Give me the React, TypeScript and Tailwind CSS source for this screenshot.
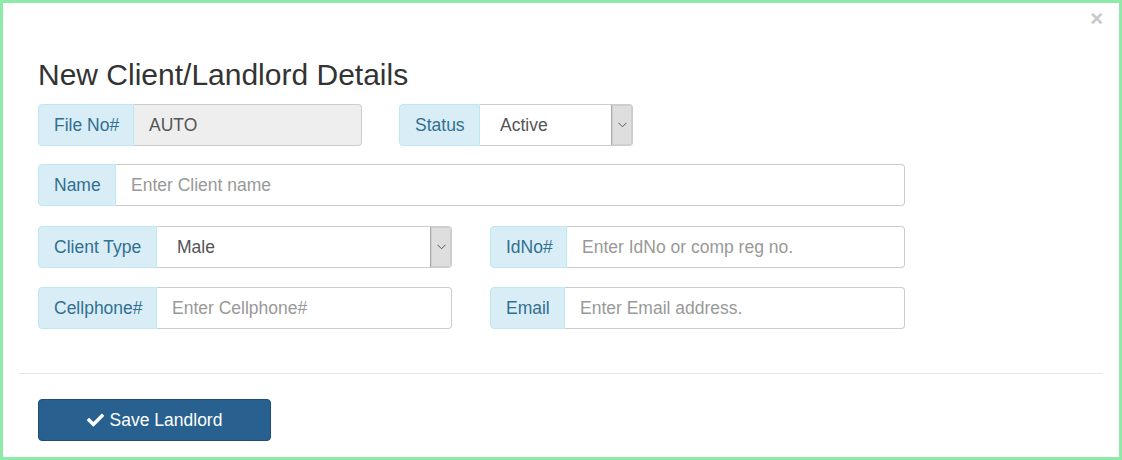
import React from 'react';

const addon =
  'flex items-center px-[15px] bg-[#d9edf7] text-[#31708f] border border-[#bce8f1] rounded-l-[4px] whitespace-nowrap';
const field =
  'flex-1 min-w-0 flex items-center px-[15px] border border-l-0 border-[#ccc] rounded-r-[4px] text-[#555]';

function Chevron() {
  return (
    <svg width="9" height="6" viewBox="0 0 9 6" fill="none">
      <path d="M0.5 0.8 L4.5 4.8 L8.5 0.8" stroke="#555" strokeWidth="1" />
    </svg>
  );
}

function SelectBox({ value }: { value: string }) {
  return (
    <div className="flex-1 min-w-0 flex border border-l-0 border-[#ccc] rounded-r-[4px] text-[#555] bg-white overflow-hidden">
      <div className="flex-1 flex items-center pl-[20px]">{value}</div>
      <div className="w-[21px] flex items-center justify-center bg-[#dedede] border-l border-[#aaa] shadow-[inset_0_0_0_1px_#cfcfcf]">
        <Chevron />
      </div>
    </div>
  );
}

function Group({
  label,
  width,
  addonWidth,
  children,
}: {
  label: string;
  width: string;
  addonWidth: string;
  children: React.ReactNode;
}) {
  return (
    <div className={`flex h-[42px] ${width}`}>
      <div className={`${addon} ${addonWidth}`}>{label}</div>
      {children}
    </div>
  );
}

export default function App() {
  return (
    <div className="w-[1122px] h-[460px] border-[3px] border-[#8eeaa9] bg-white relative font-['Liberation_Sans',Arial,sans-serif] text-[17.5px]">
      <button className="absolute top-[5px] right-[16px] text-[22px] font-bold leading-none text-[#c8c8c8]">
        ×
      </button>

      <div className="px-[35px]">
        <h2 className="mt-[55px] text-[30px] leading-[33px] text-[#333]">New Client/Landlord Details</h2>

        <div className="mt-[13px] flex gap-[37px]">
          <Group label="File No#" width="w-[324px]" addonWidth="w-[96px]">
            <div className={`${field} bg-[#eee]`}>AUTO</div>
          </Group>
          <Group label="Status" width="w-[234px]" addonWidth="w-[81px]">
            <SelectBox value="Active" />
          </Group>
        </div>

        <div className="mt-[18px] flex">
          <Group label="Name" width="w-[867px]" addonWidth="w-[78px]">
            <div className={`${field} bg-white text-[#999]`}>Enter Client name</div>
          </Group>
        </div>

        <div className="mt-[20px] flex gap-[38px]">
          <Group label="Client Type" width="w-[414px]" addonWidth="w-[119px]">
            <SelectBox value="Male" />
          </Group>
          <Group label="IdNo#" width="w-[415px]" addonWidth="w-[77px]">
            <div className={`${field} bg-white text-[#999]`}>Enter IdNo or comp reg no.</div>
          </Group>
        </div>

        <div className="mt-[19px] flex gap-[38px]">
          <Group label="Cellphone#" width="w-[414px]" addonWidth="w-[119px]">
            <div className={`${field} bg-white text-[#999]`}>Enter Cellphone#</div>
          </Group>
          <Group label="Email" width="w-[415px]" addonWidth="w-[75px]">
            <div className={`${field} bg-white text-[#999]`}>Enter Email address.</div>
          </Group>
        </div>
      </div>

      <div className="mx-[16px] mt-[44px] border-t border-[#e5e5e5]" />

      <div className="px-[35px] pt-[25px]">
        <button className="w-[233px] h-[42px] flex items-center justify-center gap-[6px] bg-[#286090] border border-[#204d74] rounded-[4px] text-white">
          <svg width="17" height="14" viewBox="0 0 512 400" fill="white">
            <path d="M173.9 389.8L7.5 223.4c-10-10-10-26.2 0-36.2l36.2-36.2c10-10 26.2-10 36.2 0L192 263.1 432.1 23c10-10 26.2-10 36.2 0l36.2 36.2c10 10 10 26.2 0 36.2L210.1 389.8c-10 10-26.2 10-36.2 0z" />
          </svg>
          <span>Save Landlord</span>
        </button>
      </div>
    </div>
  );
}
